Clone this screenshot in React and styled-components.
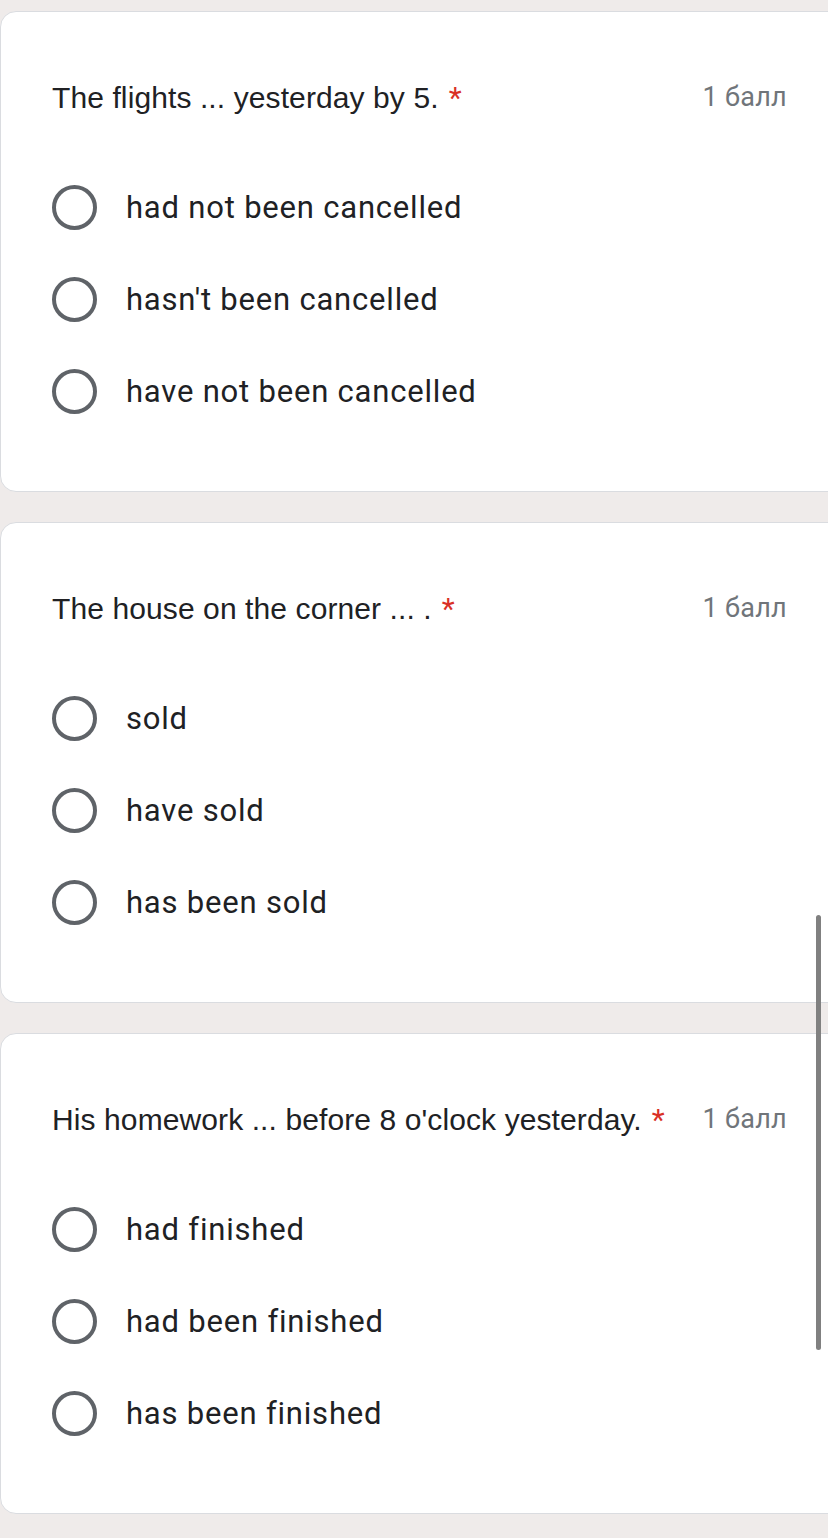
import React from "react";
import styled, { createGlobalStyle } from "styled-components";

const Global = createGlobalStyle`
  html, body {
    margin: 0;
    padding: 0;
    background: #efebea;
  }
  body {
    font-family: Roboto, "Liberation Sans", sans-serif;
    overflow: hidden;
  }
`;

const Page = styled.div`
  position: relative;
  width: 828px;
  height: 1538px;
  overflow: hidden;
  padding-top: 11px;
  box-sizing: border-box;
  display: flex;
  flex-direction: column;
  gap: 30px;
`;

const Card = styled.section`
  box-sizing: border-box;
  width: 860px;
  height: 481px;
  background: #fff;
  border: 1px solid #dadce0;
  border-radius: 16px;
  padding: 65px 72px 0 51px;
  display: flex;
  flex-direction: column;
`;

const Header = styled.div`
  display: flex;
  align-items: center;
  justify-content: space-between;
  height: 40px;
`;

const Question = styled.div`
  font-family: "Liberation Sans", sans-serif;
  font-size: 30px;
  letter-spacing: 0.1px;
  color: #202124;
  white-space: nowrap;
`;

const Star = styled.span`
  color: #d93025;
  margin-left: 10px;
  font-family: Roboto, sans-serif;
`;

const Points = styled.div`
  font-size: 27px;
  letter-spacing: 0.3px;
  color: #70757a;
  white-space: nowrap;
`;

const Options = styled.div`
  margin-top: 44px;
  display: flex;
  flex-direction: column;
`;

const Option = styled.label`
  height: 92px;
  display: flex;
  align-items: center;
  gap: 29px;
  font-size: 31px;
  color: #202124;
  letter-spacing: 0.8px;
`;

const Radio = styled.span`
  box-sizing: border-box;
  width: 45px;
  height: 45px;
  border-radius: 50%;
  border: 4px solid #5f6368;
  flex: none;
`;

const Scrollbar = styled.div`
  position: absolute;
  left: 816px;
  top: 915px;
  width: 5px;
  height: 435px;
  border-radius: 3px;
  background: #808080;
`;

const questions = [
  {
    text: "The flights ... yesterday by 5.",
    options: ["had not been cancelled", "hasn't been cancelled", "have not been cancelled"],
  },
  {
    text: "The house on the corner ... .",
    options: ["sold", "have sold", "has been sold"],
  },
  {
    text: "His homework ... before 8 o'clock yesterday.",
    options: ["had finished", "had been finished", "has been finished"],
  },
];

export default function App() {
  return (
    <Page>
      <Global />
      {questions.map((q) => (
        <Card key={q.text}>
          <Header>
            <Question>
              {q.text}
              <Star>*</Star>
            </Question>
            <Points>1 балл</Points>
          </Header>
          <Options>
            {q.options.map((o) => (
              <Option key={o}>
                <Radio />
                {o}
              </Option>
            ))}
          </Options>
        </Card>
      ))}
      <Scrollbar />
    </Page>
  );
}
